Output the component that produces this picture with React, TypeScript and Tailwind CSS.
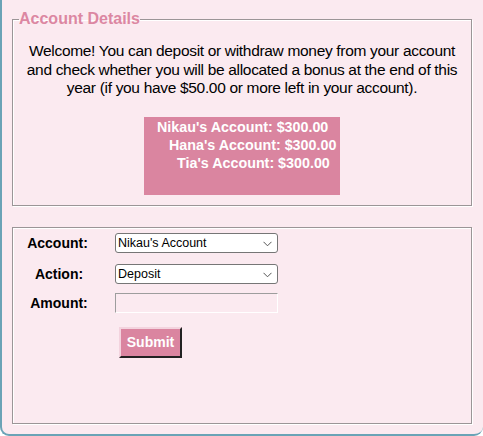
import React from "react";

const font = { fontFamily: '"Liberation Sans", Arial, sans-serif' };

function Chevron() {
  return (
    <svg
      width="9"
      height="6"
      viewBox="0 0 9 6"
      className="pointer-events-none absolute right-[5px] top-[7px]"
    >
      <path d="M0.5 0.8 L4.5 4.8 L8.5 0.8" fill="none" stroke="#555" strokeWidth="1" />
    </svg>
  );
}

function FakeSelect({ value }: { value: string }) {
  return (
    <div className="relative h-[20px] w-[163px] rounded-[3px] border border-[#767676] bg-white font-normal">
      <span className="absolute left-[2px] top-[2px] text-[12.5px] leading-[14px] text-black">
        {value}
      </span>
      <Chevron />
    </div>
  );
}

export default function App() {
  return (
    <div
      className="h-[436px] w-[483px] overflow-hidden rounded-b-[9px] border-b-2 border-l-2 border-[#6aa3b6] bg-[#fbeaf0]"
      style={font}
    >
      {/* account details */}
      <fieldset className="ml-[10px] mt-[10px] h-[196px] w-[460px] border border-[#9b9597] shadow-[inset_1px_1px_0_#fff,1px_1px_0_#fff]">
        <legend className="ml-[6px] p-0 text-[16px] font-bold leading-[18px] text-[#dc87a2]">
          Account Details
        </legend>
        <p className="mt-[14px] text-center text-[15.5px] leading-[18.5px] tracking-[-0.32px] text-black">
          Welcome! You can deposit or withdraw money from your account
          <br />
          and check whether you will be allocated a bonus at the end of this
          <br />
          year (if you have $50.00 or more left in your account).
        </p>
        <div className="mx-auto mt-[19px] h-[78px] w-[196px] bg-[#da85a0] pt-[1px] text-[14.3px] font-bold leading-[18px] text-white">
          <div className="ml-[13px]">Nikau's Account: $300.00</div>
          <div className="ml-[25px]">Hana's Account: $300.00</div>
          <div className="ml-[33px]">Tia's Account: $300.00</div>
        </div>
      </fieldset>

      {/* transaction form */}
      <div className="ml-[10px] mt-[21px] h-[197px] w-[460px] border border-[#9b9597] pt-[5px] shadow-[inset_1px_1px_0_#fff,1px_1px_0_#fff]">
        <div className="grid grid-cols-[90px_163px] gap-x-[11px] gap-y-[10px] pl-[1px] text-[14px] font-bold text-black">
          <div className="-ml-[3px] flex items-center justify-center">Account:</div>
          <FakeSelect value="Nikau's Account" />
          <div className="flex items-center justify-center">Action:</div>
          <FakeSelect value="Deposit" />
          <div className="-mt-[2px] flex items-center justify-center">Amount:</div>
          <div className="-mt-[2px] h-[20px] w-[163px] border border-b-white border-l-[#9d9d9d] border-r-white border-t-[#9d9d9d] bg-[#fbeaf0]" />
          <div />
          <div className="pl-[4px] pt-[3px]">
            <div className="flex h-[31px] w-[63px] items-center justify-center border-2 border-b-[#222] border-l-[#f3d3de] border-r-[#222] border-t-[#f3d3de] bg-[#da85a0] text-[14px] font-bold text-white">
              Submit
            </div>
          </div>
        </div>
      </div>
    </div>
  );
}
